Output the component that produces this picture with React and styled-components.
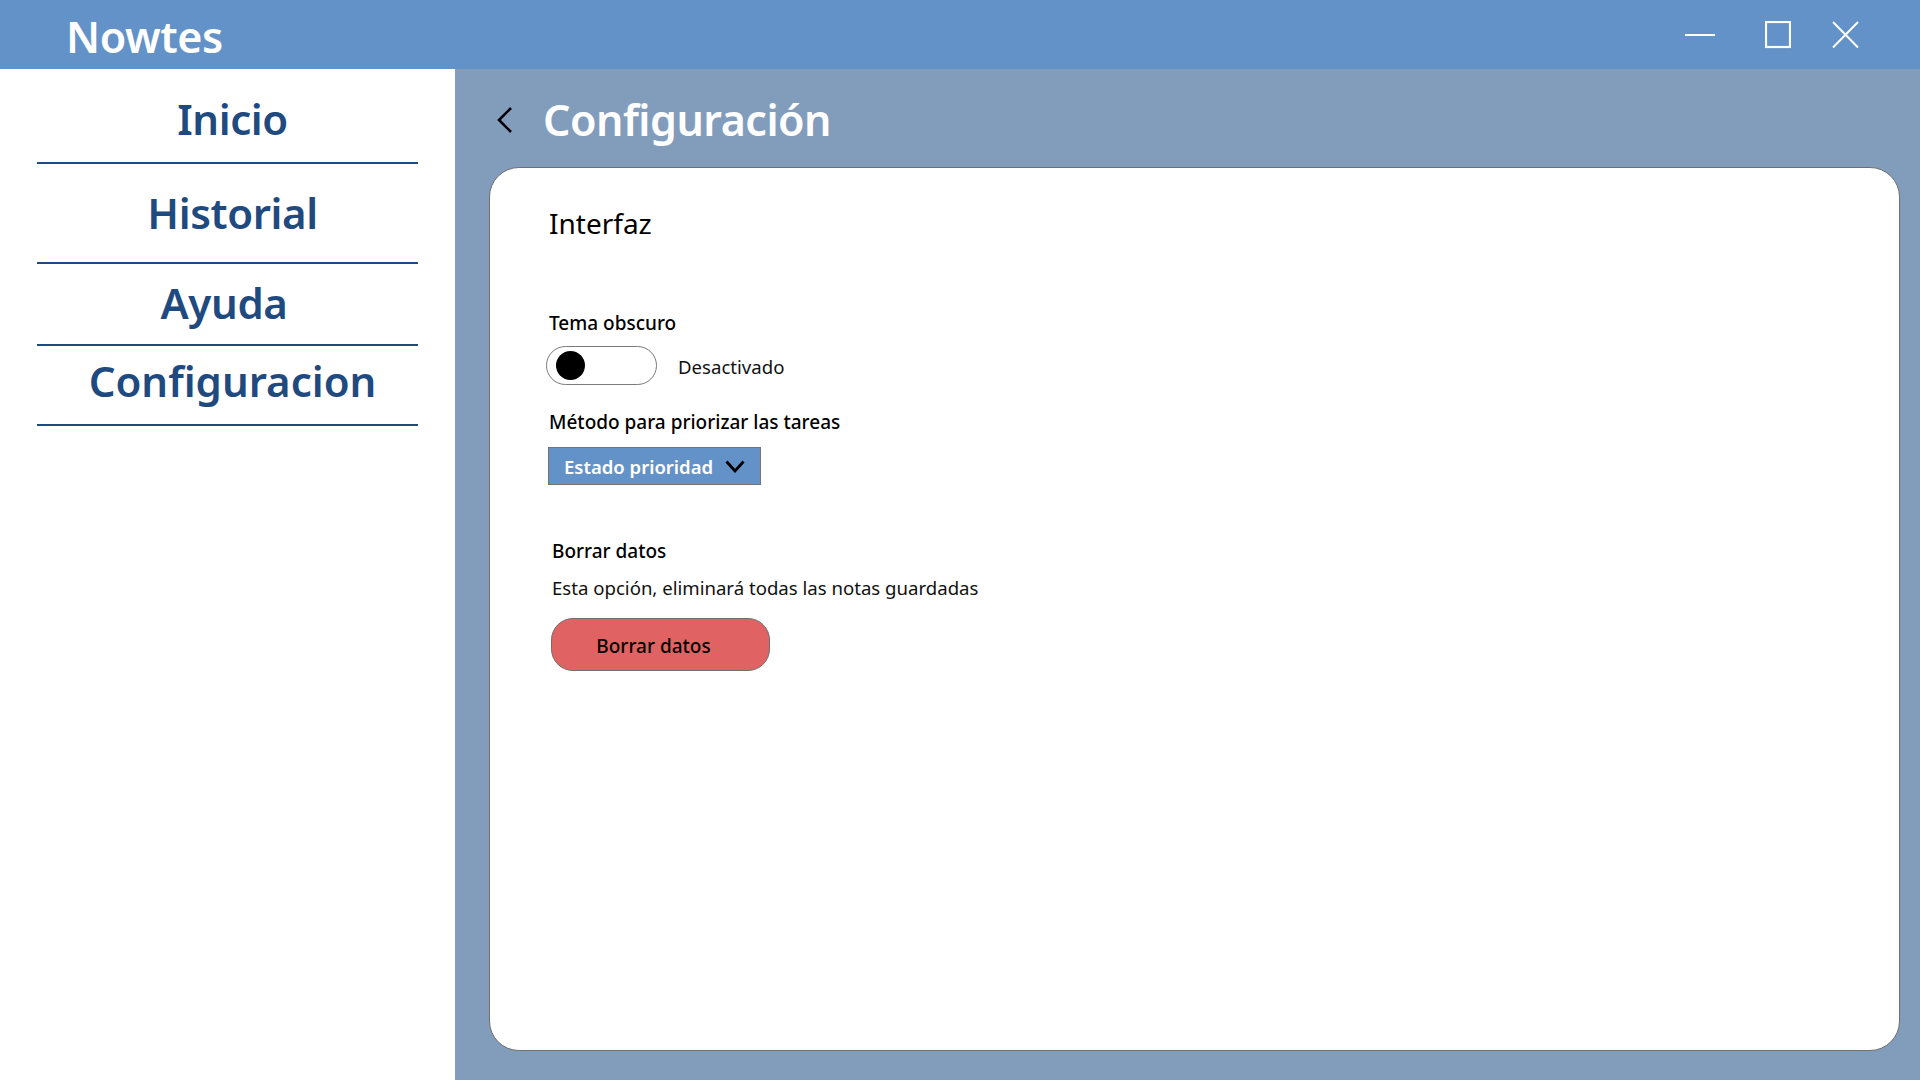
import React from "react";
import styled, { createGlobalStyle } from "styled-components";

const Global = createGlobalStyle`
  html, body { margin: 0; padding: 0; }
  body { font-family: "Noto Sans", "Open Sans", sans-serif; }
  * { box-sizing: border-box; }
`;

const Shell = styled.div`
  width: 1920px;
  height: 1080px;
  display: flex;
  flex-direction: column;
  overflow: hidden;
`;

const TitleBar = styled.header`
  height: 69px;
  flex: none;
  background: #6392c8;
  display: flex;
  align-items: center;
  padding-left: 66px;
`;

const AppName = styled.h1`
  margin: 0;
  color: #fff;
  font-size: 43px;
  font-weight: 600;
  line-height: 1;
  letter-spacing: -0.4px;
  flex: 1;
  padding-top: 3px;
`;

const Controls = styled.div`
  display: flex;
  align-items: center;
  height: 100%;
  padding-right: 61px;
`;

const CtrlIcon = styled.svg`
  display: block;
  width: ${(p) => p.$w}px;
  height: 28px;
  margin-left: ${(p) => p.$ml || 0}px;
  stroke: #fff;
  fill: none;
`;

const Body = styled.div`
  flex: 1;
  display: flex;
  min-height: 0;
`;

const Sidebar = styled.nav`
  width: 455px;
  flex: none;
  background: #fff;
  padding: 0 37px;
  display: flex;
  flex-direction: column;
`;

const NavItem = styled.a`
  height: ${(p) => p.$h}px;
  padding-top: ${(p) => p.$top}px;
  padding-left: ${(p) => p.$pl ?? 10}px;
  padding-right: ${(p) => p.$pr ?? 0}px;
  border-bottom: 2px solid #1f4a80;
  text-align: center;
  color: #1f4a80;
  font-size: 42px;
  font-weight: 600;
  line-height: 1;
  text-decoration: none;
  letter-spacing: ${(p) => p.$ls ?? -0.4}px;
`;

const Main = styled.main`
  flex: 1;
  background: #829dbc;
  display: flex;
  flex-direction: column;
  padding: 0 20px 29px 34px;
  min-width: 0;
`;

const PageHeader = styled.div`
  height: 98px;
  flex: none;
  display: flex;
  align-items: center;
  padding-left: 7px;
  padding-top: 4px;
  gap: 29px;
`;

const PageTitle = styled.h2`
  margin: 0;
  color: #fff;
  font-size: 43px;
  font-weight: 600;
  line-height: 1;
  letter-spacing: -0.5px;
  padding-bottom: 2px;
`;

const Card = styled.section`
  flex: 1;
  background: #fff;
  border: 1px solid #6f6f6f;
  border-radius: 30px;
  padding: 39px 0 0 59px;
  display: flex;
  flex-direction: column;
  align-items: flex-start;
`;

const SectionTitle = styled.h3`
  margin: 0;
  font-size: 28px;
  font-weight: 400;
  line-height: 1.2;
  color: #000;
`;

const Label = styled.div`
  margin-top: ${(p) => p.$mt}px;
  margin-left: ${(p) => p.$ml || 0}px;
  font-size: 19px;
  font-weight: 500;
  line-height: 1.2;
  color: #000;
`;

const Text = styled.div`
  margin-top: ${(p) => p.$mt}px;
  margin-left: ${(p) => p.$ml || 0}px;
  font-size: 18.6px;
  font-weight: 400;
  line-height: 1.2;
  color: #111;
`;

const ToggleRow = styled.div`
  margin-top: 12px;
  margin-left: -3px;
  display: flex;
  align-items: center;
  gap: 21px;
`;

const Toggle = styled.div`
  width: 111px;
  height: 39px;
  border: 1px solid #7a7a7a;
  border-radius: 20px;
  background: #fff;
  display: flex;
  align-items: center;
  padding-left: 9px;
`;

const Knob = styled.div`
  width: 29px;
  height: 29px;
  border-radius: 50%;
  background: #000;
`;

const ToggleText = styled.span`
  font-size: 18.6px;
  color: #111;
  line-height: 1;
  padding-top: 2px;
`;

const Dropdown = styled.button`
  margin-top: 13px;
  margin-left: -1px;
  width: 213px;
  height: 38px;
  background: #6392c8;
  border: 1px solid #747474;
  border-radius: 0;
  display: flex;
  align-items: center;
  padding: 0 0 0 15px;
  gap: 12px;
  font-family: inherit;
  font-size: 18.5px;
  font-weight: 600;
  color: #fff;
  cursor: pointer;
`;

const DangerButton = styled.button`
  margin-top: 19px;
  margin-left: 2px;
  width: 219px;
  height: 53px;
  border-radius: 22px;
  border: 1px solid #707070;
  background: #e06262;
  font-family: inherit;
  font-size: 19px;
  font-weight: 500;
  color: #000;
  padding: 2px 14px 0 0;
  cursor: pointer;
`;

export default function App() {
  return (
    <>
      <Global />
      <Shell>
        <TitleBar>
          <AppName>Nowtes</AppName>
          <Controls>
            <CtrlIcon $w={30} viewBox="0 0 30 28">
              <line x1="0" y1="14" x2="30" y2="14" strokeWidth="2" />
            </CtrlIcon>
            <CtrlIcon $w={26} $ml={50} viewBox="0 0 26 28">
              <rect x="1" y="1" width="24" height="25" strokeWidth="2.2" />
            </CtrlIcon>
            <CtrlIcon $w={27} $ml={41} viewBox="0 0 27 28">
              <path d="M1 1 L26 26.5 M26 1 L1 26.5" strokeWidth="2" />
            </CtrlIcon>
          </Controls>
        </TitleBar>
        <Body>
          <Sidebar>
            <NavItem $h={95} $top={29}>Inicio</NavItem>
            <NavItem $h={100} $top={28}>Historial</NavItem>
            <NavItem $h={82} $top={18} $pl={0} $pr={7}>Ayuda</NavItem>
            <NavItem $h={80} $top={14} $ls={0}>Configuracion</NavItem>
          </Sidebar>
          <Main>
            <PageHeader>
              <svg width="18" height="28" viewBox="0 0 18 28" fill="none">
                <path d="M15 2 L3 14 L15 26" stroke="#000" strokeWidth="2.6" />
              </svg>
              <PageTitle>Configuración</PageTitle>
            </PageHeader>
            <Card>
              <SectionTitle>Interfaz</SectionTitle>
              <Label $mt={71}>Tema obscuro</Label>
              <ToggleRow>
                <Toggle>
                  <Knob />
                </Toggle>
                <ToggleText>Desactivado</ToggleText>
              </ToggleRow>
              <Label $mt={26}>Método para priorizar las tareas</Label>
              <Dropdown>
                Estado prioridad
                <svg width="20" height="13" viewBox="0 0 20 13" fill="none">
                  <path d="M1.5 1.5 L10 11 L18.5 1.5" stroke="#000" strokeWidth="2.8" />
                </svg>
              </Dropdown>
              <Label $mt={55} $ml={3}>Borrar datos</Label>
              <Text $mt={14} $ml={3}>Esta opción, eliminará todas las notas guardadas</Text>
              <DangerButton>Borrar datos</DangerButton>
            </Card>
          </Main>
        </Body>
      </Shell>
    </>
  );
}
